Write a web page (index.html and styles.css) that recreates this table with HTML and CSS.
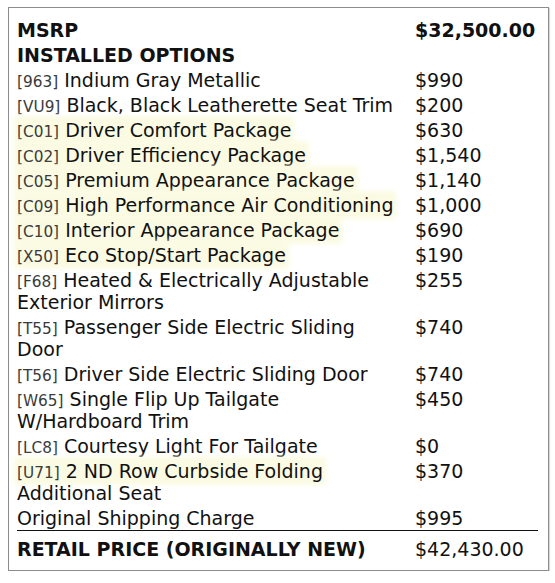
FILE: index.html
```html
<!DOCTYPE html>
<html>
<head>
<meta charset="utf-8">
<link rel="stylesheet" href="styles.css">
</head>
<body>
<div class="sticker">
  <table class="prices">
    <tr class="bold"><td class="desc">MSRP</td><td class="amt">$32,500.00</td></tr>
    <tr class="bold"><td class="desc">INSTALLED OPTIONS</td><td class="amt"></td></tr>
    <tr><td class="desc"><span class="code">[963]</span> Indium Gray Metallic</td><td class="amt">$990</td></tr>
    <tr><td class="desc"><span class="code">[VU9]</span> Black, Black Leatherette Seat Trim</td><td class="amt">$200</td></tr>
    <tr><td class="desc"><span class="hl"><span class="code">[C01]</span> Driver Comfort Package</span></td><td class="amt">$630</td></tr>
    <tr><td class="desc"><span class="hl"><span class="code">[C02]</span> Driver Efficiency Package</span></td><td class="amt">$1,540</td></tr>
    <tr><td class="desc"><span class="hl"><span class="code">[C05]</span> Premium Appearance Package</span></td><td class="amt">$1,140</td></tr>
    <tr><td class="desc"><span class="hl"><span class="code">[C09]</span> High Performance Air Conditioning</span></td><td class="amt">$1,000</td></tr>
    <tr><td class="desc"><span class="hl"><span class="code">[C10]</span> Interior Appearance Package</span></td><td class="amt">$690</td></tr>
    <tr><td class="desc"><span class="hl"><span class="code">[X50]</span> Eco Stop/Start Package</span></td><td class="amt">$190</td></tr>
    <tr><td class="desc"><span class="code">[F68]</span> Heated &amp; Electrically Adjustable Exterior Mirrors</td><td class="amt">$255</td></tr>
    <tr><td class="desc"><span class="code">[T55]</span> Passenger Side Electric Sliding Door</td><td class="amt">$740</td></tr>
    <tr><td class="desc"><span class="code">[T56]</span> Driver Side Electric Sliding Door</td><td class="amt">$740</td></tr>
    <tr><td class="desc"><span class="code">[W65]</span> Single Flip Up Tailgate W/Hardboard Trim</td><td class="amt">$450</td></tr>
    <tr><td class="desc"><span class="code">[LC8]</span> Courtesy Light For Tailgate</td><td class="amt">$0</td></tr>
    <tr><td class="desc"><span class="hl"><span class="code">[U71]</span> 2 ND Row Curbside Folding</span> Additional Seat</td><td class="amt">$370</td></tr>
    <tr><td class="desc">Original Shipping Charge</td><td class="amt">$995</td></tr>
    <tr class="total"><td class="desc">RETAIL PRICE (ORIGINALLY NEW)</td><td class="amt">$42,430.00</td></tr>
  </table>
</div>
</body>
</html>
```

FILE: styles.css
```css
html, body {
  margin: 0;
  padding: 0;
  background: #ffffff;
}
body {
  padding: 7px 0 0 8px;
  font-family: "DejaVu Sans", Verdana, sans-serif;
  color: #111;
}
.sticker {
  width: 541px;
  box-sizing: border-box;
  border: 1px solid #8c8c8c;
  box-shadow: 1px 1px 1px rgba(0,0,0,0.15);
  padding: 9px 9px 8px 8px;
}
.prices {
  width: 521px;
  table-layout: fixed;
  border-collapse: collapse;
  font-size: 19px;
  line-height: 22px;
}
.prices td {
  padding: 1.5px 0;
  vertical-align: top;
}
.prices .desc {
  width: 386px;
  padding-right: 12px;
}
.code {
  font-size: 15.3px;
  line-height: 1;
  color: #3a3a3a;
}
.hl {
  background: #fbfbe4;
  box-shadow: 0 0 5px 3px #fbfbe4;
}
.bold td {
  font-weight: bold;
}
.total td {
  border-top: 1px solid #111;
  padding-top: 7px;
  font-weight: normal;
}
.total .desc {
  font-weight: bold;
}
```
